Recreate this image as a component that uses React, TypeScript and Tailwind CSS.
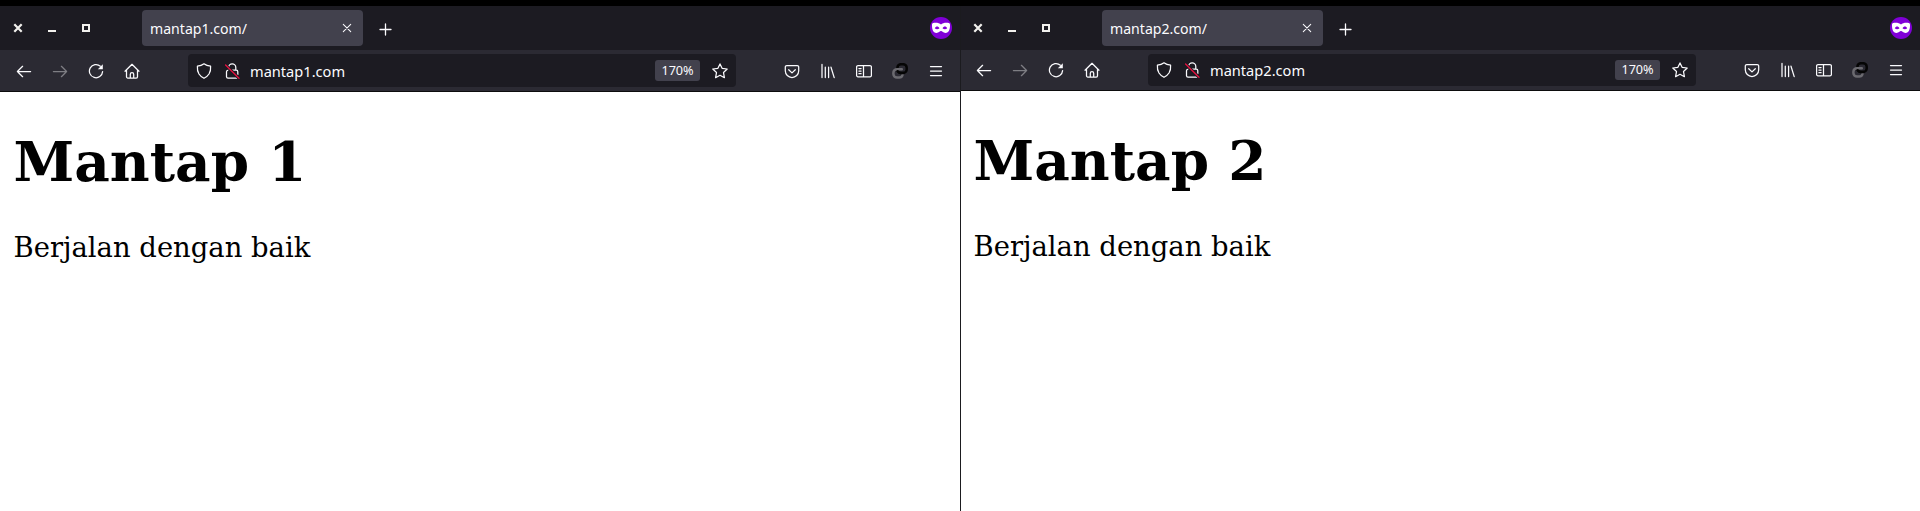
import type { ReactNode } from "react";

function Icon({ children, className = "size-4" }: { children: ReactNode; className?: string }) {
  return (
    <svg
      viewBox="0 0 16 16"
      className={`block shrink-0 ${className}`}
      fill="none"
      stroke="#fbfbfe"
      strokeWidth="1.25"
      strokeLinecap="round"
      strokeLinejoin="round"
    >
      {children}
    </svg>
  );
}

function ToolButton({ children }: { children: ReactNode }) {
  return <button className="flex h-9 w-9 shrink-0 items-center justify-center">{children}</button>;
}

function TabStrip({ title }: { title: string }) {
  return (
    <div className="flex h-11 shrink-0 items-center bg-[#1c1b22]">
      <div className="flex w-[142px] shrink-0 gap-[18px] pl-[10px]">
        <Icon>
          <path d="M4.3 4.3l7.4 7.400M11.700 4.300l-7.400 7.400" stroke="#f2f1ee" strokeWidth="2.2" strokeLinecap="butt" />
        </Icon>
        <Icon>
          <path d="M4 11h8" stroke="#f2f1ee" strokeWidth="2" strokeLinecap="butt" />
        </Icon>
        <Icon>
          <path d="M5 5h6v6H5z" stroke="#f2f1ee" strokeWidth="2" strokeLinejoin="miter" />
        </Icon>
      </div>
      <div className="flex h-9 w-[221px] shrink-0 items-center justify-between rounded bg-[#42414d] px-2">
        <span className="pt-px text-[14.1px] leading-5 text-[#fbfbfe]">{title}</span>
        <Icon>
          <path d="M4.3 4.3l7.4 7.400M11.700 4.300l-7.400 7.400" strokeWidth="1.05" />
        </Icon>
      </div>
      <div className="ml-[14px] pt-px">
        <Icon>
          <path d="M8.5 3v11M3 8.500h11" strokeWidth="1.3" />
        </Icon>
      </div>
      <svg viewBox="0 0 22 22" className="ml-auto mr-2 block size-[22px]">
        <circle cx="11" cy="11" r="11" fill="#8000d7" />
        <path
          d="M11 7.500C9.500 6 6 5.500 3.200 6.100 2.300 6.300 2 7 2 8c0 4 .9 7.900 4.600 7.900 2.200 0 3-1.900 4.400-1.900s2.200 1.900 4.400 1.900C19.100 15.900 20 12 20 8c0-1-.3-1.700-1.200-1.900C16 5.500 12.500 6 11 7.500z"
          fill="#fff"
        />
        <path
          d="M4.800 11.200c1-2 3.500-2.200 4.700 0-1.300 1.500-3.500 1.500-4.700 0zM17.200 11.200c-1-2-3.500-2.200-4.700 0 1.300 1.500 3.500 1.500 4.700 0z"
          fill="#8000d7"
        />
      </svg>
    </div>
  );
}

function AddressBar({ host, compact }: { host: string; compact: boolean }) {
  return (
    <div
      className={`flex w-[548px] shrink-0 items-center rounded bg-[#1c1b22] ${compact ? "h-8" : "h-[33px] pt-px"}`}
    >
      <div className="ml-2 flex items-center gap-3">
        <Icon>
          <path d="M8 .8C6.4 2 3.8 2.9 1.4 3.2c-.3 3 .3 5.6 1.6 7.8C4.2 12.9 6 14.3 8 15.3c2-1 3.8-2.4 5-4.3 1.3-2.2 1.9-4.8 1.6-7.8C12.2 2.9 9.6 2 8 .8z" />
        </Icon>
        <Icon>
          <path d="M4.6 6.6V4.5a3.6 3.6 0 0 1 7.2 0v2.2M8.2 7.2h4.1a1.5 1.5 0 0 1 1.5 1.5v2.8M3.6 7.3a1.5 1.5 0 0 0-1.1 1.4v5a1.5 1.5 0 0 0 1.5 1.4h9" />
          <path d="M1.8 2.2l13.2 13" stroke="#1c1b22" strokeWidth="3" />
          <path d="M1.6 2l13.4 13.2" stroke="#e8113f" strokeWidth="1.3" />
        </Icon>
      </div>
      <span className="ml-[10px] text-[14.6px] leading-5 text-[#fbfbfe]">{host}</span>
      <span
        className={`ml-auto flex w-[45px] items-center justify-center rounded-[3px] bg-[#42414d] text-[12.7px] tracking-[-0.1px] text-[#fbfbfe] ${
          compact ? "h-5" : "-mt-px h-[21px]"
        }`}
      >
        170%
      </span>
      <div className="ml-3 mr-2">
        <Icon>
          <path d="M8 .9l2.1 4.4 5.1.7-3.7 3.5.9 5.2L8 12.3l-4.4 2.4.9-5.2L.8 6l5.1-.7z" />
        </Icon>
      </div>
    </div>
  );
}

function Toolbar({ host, compact }: { host: string; compact: boolean }) {
  const rowShift = compact ? "" : "pt-px";
  return (
    <div
      className={`flex shrink-0 items-center border-b border-[#0c0c0d] bg-[#2b2a33] px-[6px] ${
        compact ? "h-[41px]" : "h-[42px]"
      }`}
    >
      <div className={`flex ${rowShift}`}>
        <ToolButton>
          <Icon>
            <path d="M1.4 8.5h13.2M6.6 3.300L1.400 8.500l5.200 5.200" />
          </Icon>
        </ToolButton>
        <ToolButton>
          <Icon className="size-4 opacity-40">
            <path d="M14.600 8.500H1.400M9.400 3.300l5.200 5.200-5.200 5.200" />
          </Icon>
        </ToolButton>
        <ToolButton>
          <Icon>
            <path d="M12.4 3.2A6.6 6.6 0 1 0 14.6 8.6" />
            <path d="M14.8 1.2v5H9.8z" fill="#fbfbfe" stroke="none" />
          </Icon>
        </ToolButton>
        <ToolButton>
          <Icon>
            <path d="M1 8.2L8 1.3l7 6.9M2.5 7v6.7A1.3 1.3 0 0 0 3.8 15h8.4a1.3 1.3 0 0 0 1.3-1.3V7M6.3 14.8v-3.6a1.7 1.7 0 0 1 3.4 0v3.6" />
          </Icon>
        </ToolButton>
      </div>
      <div className="ml-[38px] mr-auto">
        <AddressBar host={host} compact={compact} />
      </div>
      <div className={`flex ${rowShift}`}>
        <ToolButton>
          <Icon>
            <path d="M2.8 2.6h10.4a1.5 1.5 0 0 1 1.5 1.5v3.7a6.7 6.7 0 0 1-13.4 0V4.1a1.5 1.5 0 0 1 1.5-1.5zM4.7 6.7L8 9.9l3.3-3.2" />
          </Icon>
        </ToolButton>
        <ToolButton>
          <Icon>
            <path d="M2 1.4v13.2M5.3 4.2v10.4M8.6 4.2v10.4M11 4.2l3.2 10.4" />
          </Icon>
        </ToolButton>
        <ToolButton>
          <Icon>
            <path d="M2 2.6h12a1.4 1.4 0 0 1 1.4 1.4v8.4a1.4 1.4 0 0 1-1.4 1.4H2A1.4 1.4 0 0 1 .6 12.4V4A1.4 1.4 0 0 1 2 2.6zM7.5 2.6v11.2M2.9 5.5h2.2M2.9 8.1h2.2M2.9 10.7h2.2" />
          </Icon>
        </ToolButton>
        <ToolButton>
          <Icon>
            <rect x="5.4" y="1.2" width="9.3" height="8.800" rx="3.600" stroke="#050505" strokeWidth="2.500" />
            <path
              d="M9.800 6.200H5A3.600 3.600 0 0 0 1.400 9.800v1.200A3.600 3.600 0 0 0 5 14.600h2.200a3.400 3.400 0 0 0 3.300-2.600"
              stroke="#6b6a70"
              strokeWidth="2.500"
            />
            <path d="M5.600 8.200C6.200 9.300 7.300 10 8.600 10h2.600" stroke="#050505" strokeWidth="2.300" />
          </Icon>
        </ToolButton>
        <ToolButton>
          <Icon>
            <path d="M2.5 3.5h11M2.5 8h11M2.5 12.5h11" />
          </Icon>
        </ToolButton>
      </div>
    </div>
  );
}

function BrowserWindow({ name, host, compact = false }: { name: string; host: string; compact?: boolean }) {
  return (
    <section className="relative flex w-[960px] shrink-0 flex-col">
      <TabStrip title={`${host}/`} />
      <Toolbar host={host} compact={compact} />
      <main className="grow bg-white pl-[13.5px] pt-[38px] font-['DejaVu_Serif',serif] text-black">
        <h1 className="text-[54.9px] font-bold leading-[64px]">{name}</h1>
        <p className="mt-[38px] text-[27.43px] leading-8">Berjalan dengan baik</p>
      </main>
      {compact && <div className="absolute inset-y-0 left-0 w-px bg-[#1b1b1f]" />}
    </section>
  );
}

export default function App() {
  return (
    <div className="flex h-[511px] w-[1920px] overflow-hidden bg-black pt-[6px] font-['Noto_Sans',sans-serif]">
      <BrowserWindow name="Mantap 1" host="mantap1.com" />
      <BrowserWindow name="Mantap 2" host="mantap2.com" compact />
    </div>
  );
}
